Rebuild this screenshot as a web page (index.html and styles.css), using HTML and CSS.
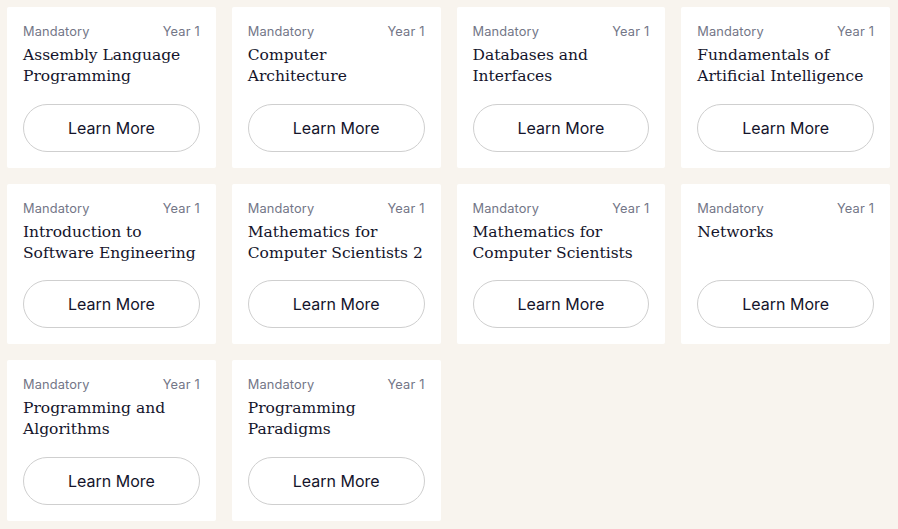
FILE: index.html
```html
<!DOCTYPE html>
<html>
<head>
<meta charset="utf-8">
<link rel="stylesheet" href="styles.css">
</head>
<body>
<div class="grid">
  <div class="card"><div class="meta"><span>Mandatory</span><span>Year 1</span></div><h3 class="title">Assembly Language Programming</h3><a class="btn">Learn More</a></div>
  <div class="card"><div class="meta"><span>Mandatory</span><span>Year 1</span></div><h3 class="title">Computer Architecture</h3><a class="btn">Learn More</a></div>
  <div class="card"><div class="meta"><span>Mandatory</span><span>Year 1</span></div><h3 class="title">Databases and Interfaces</h3><a class="btn">Learn More</a></div>
  <div class="card"><div class="meta"><span>Mandatory</span><span>Year 1</span></div><h3 class="title">Fundamentals of Artificial Intelligence</h3><a class="btn">Learn More</a></div>
  <div class="card"><div class="meta"><span>Mandatory</span><span>Year 1</span></div><h3 class="title">Introduction to Software Engineering</h3><a class="btn">Learn More</a></div>
  <div class="card"><div class="meta"><span>Mandatory</span><span>Year 1</span></div><h3 class="title">Mathematics for Computer Scientists 2</h3><a class="btn">Learn More</a></div>
  <div class="card"><div class="meta"><span>Mandatory</span><span>Year 1</span></div><h3 class="title">Mathematics for Computer Scientists</h3><a class="btn">Learn More</a></div>
  <div class="card"><div class="meta"><span>Mandatory</span><span>Year 1</span></div><h3 class="title">Networks</h3><a class="btn">Learn More</a></div>
  <div class="card"><div class="meta"><span>Mandatory</span><span>Year 1</span></div><h3 class="title">Programming and Algorithms</h3><a class="btn">Learn More</a></div>
  <div class="card"><div class="meta"><span>Mandatory</span><span>Year 1</span></div><h3 class="title">Programming Paradigms</h3><a class="btn">Learn More</a></div>
</div>
</body>
</html>
```
FILE: styles.css
```css
html, body {
  margin: 0;
  padding: 0;
  background: #f8f4ee;
}
body {
  padding: 7px 8px 8px 7px;
  font-family: Inter, "Liberation Sans", sans-serif;
}
.grid {
  display: grid;
  grid-template-columns: repeat(4, 1fr);
  column-gap: 16px;
  row-gap: 16px;
}
.card {
  background: #ffffff;
  border-radius: 2px;
  padding: 17px 16px 16px 16px;
  height: 160.5px;
  box-sizing: border-box;
  display: flex;
  flex-direction: column;
}
.meta {
  display: flex;
  justify-content: space-between;
  font-size: 12.8px;
  line-height: 16px;
  letter-spacing: 0.15px;
  color: #737687;
}
.title {
  margin: 5px 0 0 0;
  font-family: "DejaVu Serif", serif;
  font-weight: 400;
  font-size: 15.5px;
  line-height: 21px;
  color: #14142b;
  flex: 1;
}
.btn {
  display: flex;
  align-items: center;
  justify-content: center;
  height: 48px;
  box-sizing: border-box;
  border: 1px solid #cfcfcf;
  border-radius: 24px;
  font-size: 16px;
  color: #14142b;
}
```
